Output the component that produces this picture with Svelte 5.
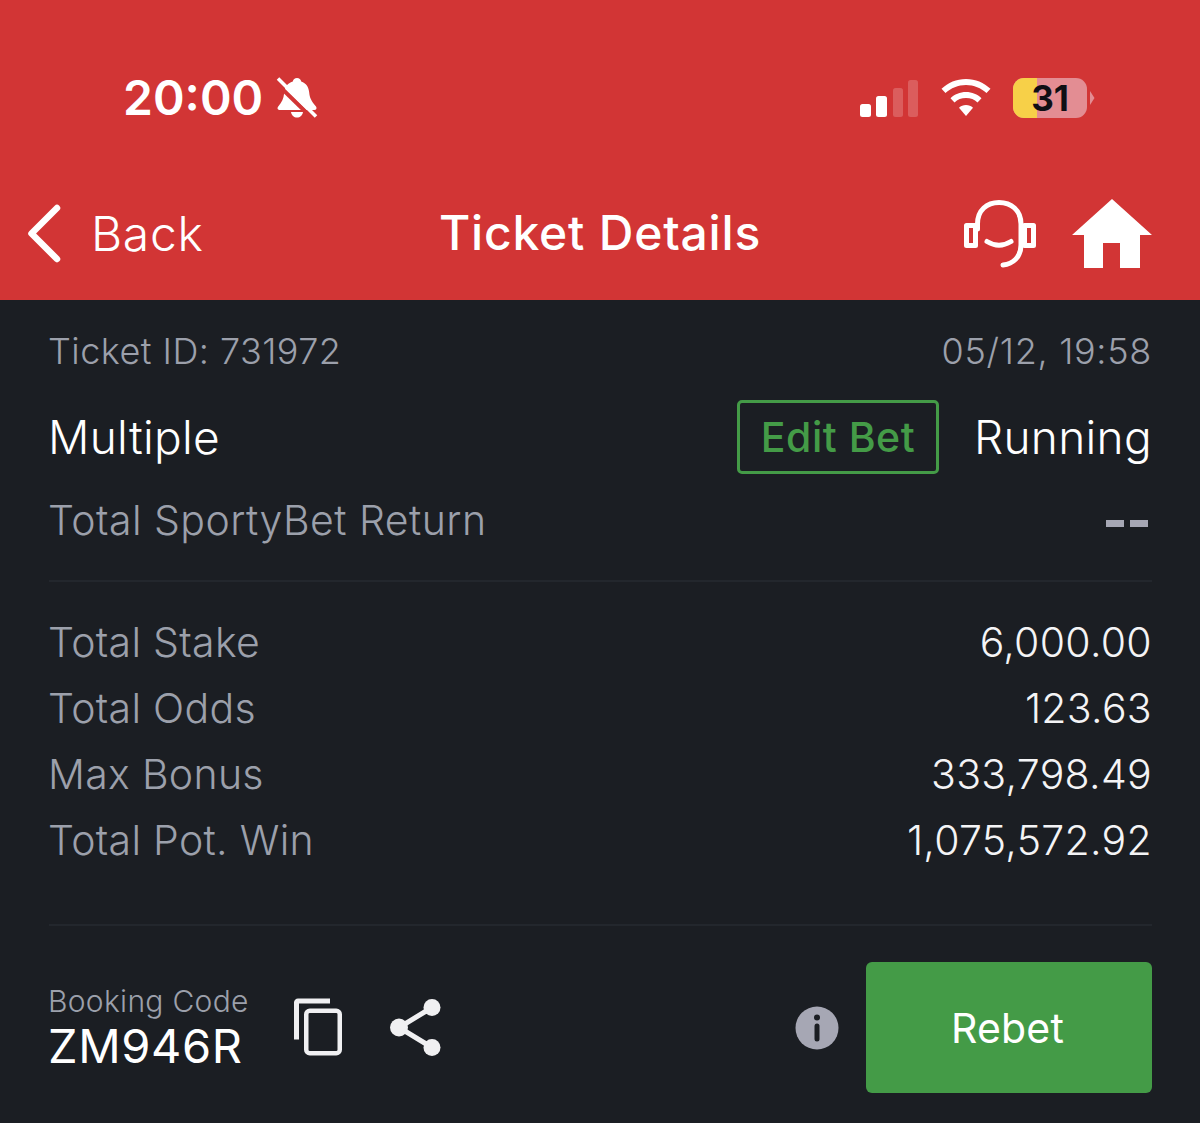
<script lang="ts">
  const rows = [
    { label: 'Total Stake', value: '6,000.00' },
    { label: 'Total Odds', value: '123.63' },
    { label: 'Max Bonus', value: '333,798.49' },
    { label: 'Total Pot. Win', value: '1,075,572.92' }
  ];
</script>

<div class="page">
  <header class="top">
    <div class="status">
      <div class="status-left">
        <span class="clock">20:00</span>
        <svg class="bell" width="42" height="44" viewBox="0 0 42 44">
          <path d="M21 2c2.300 0 3.800 1.500 4.200 3.500 5 1.700 7.500 5.500 8 11 .4 5 2 8.500 6.800 14 1.200 1.700.3 3.500-1.700 3.500H4c-2.300 0-3.200-1.800-1.800-3.500 3.800-4.500 5.400-8 5.900-13 .6-6.500 3.300-10.300 8.700-12C17.200 3.500 18.700 2 21 2z" fill="#fff"/>
          <path d="M15 36h12c-.5 3.500-3 5.500-6 5.500s-5.500-2-6-5.500z" fill="#fff"/>
          <path d="M-1 6l37 36" stroke="#d23535" stroke-width="4"/>
          <path d="M2 2.500l38 38" stroke="#fff" stroke-width="3.600"/>
        </svg>
      </div>
      <div class="status-right">
        <svg width="60" height="37" viewBox="0 0 60 37">
          <rect x="0" y="24" width="11" height="13" rx="2.500" fill="#fff"/>
          <rect x="16" y="16" width="11" height="21" rx="2.500" fill="#fff"/>
          <rect x="33" y="8" width="10" height="29" rx="2.500" fill="#fff" opacity=".2"/>
          <rect x="48" y="0" width="10" height="37" rx="2.500" fill="#fff" opacity=".2"/>
        </svg>
        <svg class="wifi" width="50" height="38" viewBox="0 0 50 38">
          <path d="M25 0c9.500 0 18 3.700 24.500 9.800l-4 4.200C40 9 33 6 25 6S10 9 4.500 14L.5 9.800C7 3.700 15.500 0 25 0z" fill="#fff"/>
          <path d="M25 13c6 0 11.500 2.300 15.500 6.200l-4 4.200C33.500 20.500 29.500 19 25 19s-8.500 1.500-11.500 4.400l-4-4.200C13.500 15.300 19 13 25 13z" fill="#fff"/>
          <path d="M25 26c2.700 0 5.200 1 7 2.800L25 37l-7-8.200c1.800-1.800 4.300-2.800 7-2.800z" fill="#fff"/>
        </svg>
        <div class="battery">
          <div class="cell"><span class="level"></span><span class="pct">31</span></div>
          <svg width="5" height="14" viewBox="0 0 5 14"><path d="M0 0l4.500 7L0 14z" fill="#e38d93"/></svg>
        </div>
      </div>
    </div>
    <nav class="bar">
      <div class="back">
        <svg width="36" height="60" viewBox="0 0 36 60">
          <path d="M30 5L4.500 30.500 30 56" fill="none" stroke="#fff" stroke-width="6.500" stroke-linecap="round" stroke-linejoin="round"/>
        </svg>
        <span>Back</span>
      </div>
      <h1>Ticket Details</h1>
      <div class="actions">
        <svg width="74" height="70" viewBox="0 0 74 70">
          <path d="M14.500 30v-5C14.500 11 24 3.500 36 3.500S58 11 58 25v21c0 12-8 19-18 20" fill="none" stroke="#fff" stroke-width="5" stroke-linecap="round"/>
          <rect x="3.500" y="26.500" width="9" height="20" fill="none" stroke="#fff" stroke-width="5" stroke-linejoin="round"/>
          <rect x="61.500" y="26.500" width="9" height="20" fill="none" stroke="#fff" stroke-width="5" stroke-linejoin="round"/>
          <path d="M24 42.500Q36 50 48 42.500" fill="none" stroke="#fff" stroke-width="5" stroke-linecap="round"/>
        </svg>
        <svg width="80" height="70" viewBox="0 0 80 70">
          <path d="M40 0l40 36H68v33H48V44H31v25H12V36H0z" fill="#fff"/>
        </svg>
      </div>
    </nav>
  </header>

  <main class="body">
    <div class="meta">
      <span>Ticket ID: 731972</span>
      <span class="date">05/12, 19:58</span>
    </div>
    <div class="type">
      <span>Multiple</span>
      <div class="type-right">
        <button class="edit">Edit Bet</button>
        <span>Running</span>
      </div>
    </div>
    <div class="return">
      <span>Total SportyBet Return</span>
      <span class="dashes"><i></i><i></i></span>
    </div>

    <div class="totals">
      {#each rows as row}
        <div class="row">
          <span class="label">{row.label}</span>
          <span class="value">{row.value}</span>
        </div>
      {/each}
    </div>

    <div class="foot">
      <div class="code">
        <span class="code-label">Booking Code</span>
        <span class="code-value">ZM946R</span>
      </div>
      <svg class="copy" width="50" height="59" viewBox="0 0 50 59">
        <path d="M36 3H4a1.500 1.500 0 0 0-1.500 1.500V41.500" fill="none" stroke="#f0f0f2" stroke-width="5"/>
        <rect x="12.250" y="12.750" width="33.500" height="42.500" rx="3.500" fill="none" stroke="#f0f0f2" stroke-width="4.500"/>
      </svg>
      <svg class="share" width="54" height="59" viewBox="0 0 54 59">
        <path d="M43 9.500L10 29.500l33 20" fill="none" stroke="#f0f0f2" stroke-width="5"/>
        <circle cx="43" cy="9.500" r="8.500" fill="#f0f0f2"/>
        <circle cx="10" cy="29.500" r="9" fill="#f0f0f2"/>
        <circle cx="43" cy="49.500" r="8.500" fill="#f0f0f2"/>
      </svg>
      <svg class="info" width="44" height="44" viewBox="0 0 44 44">
        <circle cx="22" cy="22" r="21.500" fill="#a6a7b4"/>
        <circle cx="22" cy="11.500" r="3" fill="#1b1e23"/>
        <path d="M22 20v13" stroke="#1b1e23" stroke-width="5" stroke-linecap="round"/>
      </svg>
      <button class="rebet">Rebet</button>
    </div>
  </main>
</div>

<style>
  :global(body) {
    margin: 0;
    background: #1b1e23;
  }
  .page {
    width: 1200px;
    height: 1123px;
    overflow: hidden;
    font-family: Inter, "Liberation Sans", sans-serif;
    background: #1b1e23;
    display: flex;
    flex-direction: column;
  }
  .top {
    height: 300px;
    background: #d23535;
    color: #fff;
    box-sizing: border-box;
    flex: none;
  }
  .status {
    height: 195px;
    box-sizing: border-box;
    display: flex;
    justify-content: space-between;
    align-items: flex-start;
    padding: 70px 105px 0 123px;
  }
  .status-left {
    display: flex;
    align-items: center;
    gap: 13px;
  }
  .clock {
    font-size: 48px;
    line-height: 56px;
    font-weight: 600;
  }
  .status-right {
    display: flex;
    align-items: center;
    gap: 22px;
    padding-top: 8px;
  }
  .wifi {
    margin-left: -1px;
  }
  .battery {
    display: flex;
    align-items: center;
    gap: 3px;
  }
  .cell {
    position: relative;
    width: 74px;
    height: 40px;
    border-radius: 11px;
    overflow: hidden;
    background: #e38d93;
    display: flex;
    align-items: center;
    justify-content: center;
  }
  .level {
    position: absolute;
    left: 0;
    top: 0;
    bottom: 0;
    width: 24px;
    background: #f7d048;
  }
  .pct {
    position: relative;
    font-size: 35px;
    font-weight: 700;
    color: #0f0f14;
  }
  .bar {
    position: relative;
    height: 105px;
    display: flex;
    align-items: flex-start;
    justify-content: space-between;
    padding: 8px 48px 0 27px;
  }
  .back {
    display: flex;
    align-items: center;
    gap: 28px;
    height: 60px;
    font-size: 48px;
    font-weight: 350;
    letter-spacing: 0.7px;
  }
  h1 {
    position: absolute;
    left: 0;
    right: 0;
    top: 8px;
    margin: 0;
    height: 60px;
    line-height: 60px;
    text-align: center;
    font-size: 48px;
    font-weight: 500;
    letter-spacing: 0.8px;
  }
  .actions {
    display: flex;
    align-items: flex-start;
    gap: 35px;
    margin-top: -4px;
  }
  .body {
    flex: 1;
    padding: 28px 48px 0 48px;
    color: #fff;
    letter-spacing: 0.45px;
  }
  .meta {
    display: flex;
    justify-content: space-between;
    font-size: 36px;
    line-height: 46px;
    font-weight: 350;
    color: #9ca0ab;
  }
  .date {
    letter-spacing: 0.7px;
  }
  .type {
    display: flex;
    justify-content: space-between;
    align-items: center;
    margin-top: 26px;
    height: 74px;
    font-size: 46px;
    font-weight: 350;
    letter-spacing: 0.3px;
  }
  .type-right {
    display: flex;
    align-items: center;
    gap: 35px;
  }
  .edit {
    width: 202px;
    height: 74px;
    box-sizing: border-box;
    border: 3px solid #449b47;
    border-radius: 5px;
    background: transparent;
    color: #449b47;
    font: inherit;
    font-size: 41px;
    font-weight: 450;
    letter-spacing: 0.5px;
    padding: 0;
  }
  .return {
    display: flex;
    justify-content: space-between;
    align-items: center;
    margin-top: 21px;
    height: 50px;
    font-size: 41px;
    font-weight: 350;
    color: #9ca0ab;
  }
  .dashes {
    display: flex;
    gap: 6px;
    margin: 7px 4px 0 0;
  }
  .dashes i {
    width: 18px;
    height: 7px;
    background: #a6a7b4;
  }
  .totals {
    margin: 35px 0 0 1px;
    padding: 27px 0 51px;
    border-top: 2px solid #23272d;
    border-bottom: 2px solid #23272d;
  }
  .row {
    display: flex;
    justify-content: space-between;
    align-items: center;
    height: 66px;
    margin-left: -1px;
    font-size: 41px;
    font-weight: 350;
    letter-spacing: 0.3px;
  }
  .label {
    color: #9ca0ab;
  }
  .value {
    color: #f4f4f6;
  }
  .foot {
    display: flex;
    align-items: center;
    margin-top: 36px;
    height: 131px;
  }
  .code {
    display: flex;
    flex-direction: column;
    gap: 3px;
    width: 246px;
  }
  .code-label {
    font-size: 30px;
    line-height: 34px;
    font-weight: 350;
    letter-spacing: 0.3px;
    color: #9ca0ab;
  }
  .code-value {
    font-size: 47px;
    line-height: 50px;
    font-weight: 400;
    letter-spacing: 0.6px;
  }
  .share {
    margin-left: 45px;
  }
  .info {
    margin-left: auto;
    margin-right: 27px;
  }
  .rebet {
    width: 286px;
    height: 131px;
    border: 0;
    border-radius: 6px;
    background: #449b47;
    color: #fff;
    font: inherit;
    font-size: 41px;
    font-weight: 400;
    letter-spacing: 0.2px;
    padding: 0 3px 0 0;
  }
</style>
